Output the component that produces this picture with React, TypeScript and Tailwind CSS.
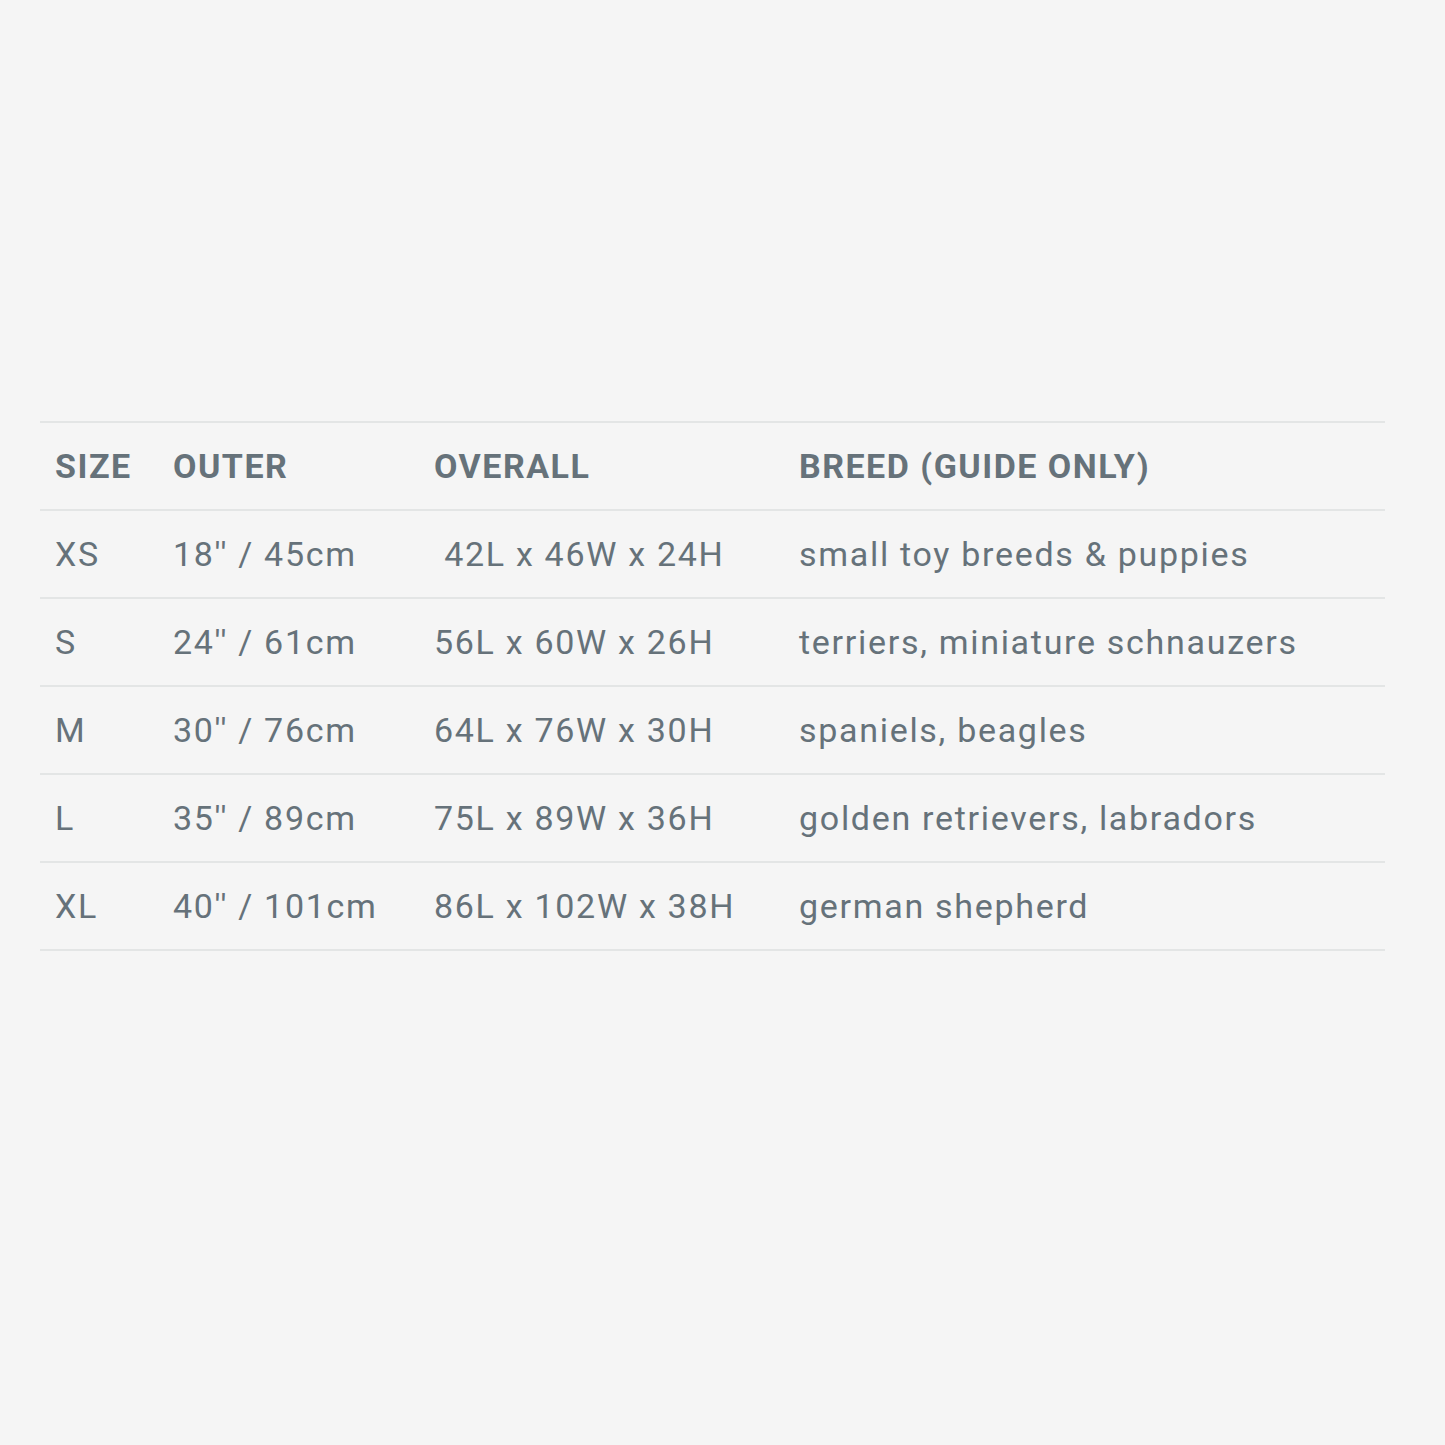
import React from 'react';

const rows = [
  ['XS', "18'' / 45cm", '\u00a042L x 46W x 24H', 'small toy breeds & puppies'],
  ['S', "24'' / 61cm", '56L x 60W x 26H', 'terriers, miniature schnauzers'],
  ['M', "30'' / 76cm", '64L x 76W x 30H', 'spaniels, beagles'],
  ['L', "35'' / 89cm", '75L x 89W x 36H', 'golden retrievers, labradors'],
  ['XL', "40'' / 101cm", '86L x 102W x 38H', 'german shepherd'],
];

const cols = 'grid grid-cols-[118px_261px_365px_1fr] h-[88px] items-center border-b-2 border-[#e3e5e5]';

const App: React.FC = () => {
  return (
    <div className="min-h-[1445px] bg-[#f5f5f5] pt-[421px] px-[40px] font-['Roboto',sans-serif] text-[#66727a]">
      <div className="w-[1345px] border-t-2 border-[#e3e5e5]">
        <div className={cols}>
          {['SIZE', 'OUTER', 'OVERALL', 'BREED (GUIDE ONLY)'].map((h) => (
            <div key={h} className="pl-[15px] text-[34px] font-bold tracking-[1.5px]">
              {h}
            </div>
          ))}
        </div>
        {rows.map((r) => (
          <div key={r[0]} className={cols}>
            {r.map((c, i) => (
              <div key={i} className="pl-[15px] text-[34px] tracking-[1.7px] whitespace-pre">
                {c}
              </div>
            ))}
          </div>
        ))}
      </div>
    </div>
  );
};

export default App;
